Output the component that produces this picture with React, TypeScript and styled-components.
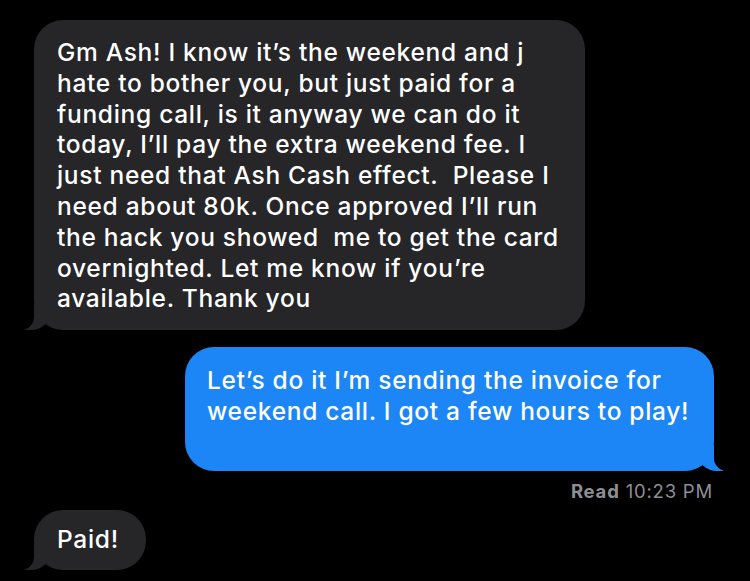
import styled, { createGlobalStyle, css } from 'styled-components'

const GlobalStyle = createGlobalStyle`
  html, body {
    margin: 0;
    padding: 0;
    background: #000;
  }
  body {
    font-family: Inter, Roboto, "Liberation Sans", sans-serif;
    -webkit-font-smoothing: antialiased;
  }
`

const gray = '#262629'
const blue = '#1c86f7'

const Thread = styled.div`
  width: 750px;
  height: 581px;
  overflow: hidden;
  background: #000;
  display: flex;
  flex-direction: column;
  padding-top: 20px;
  box-sizing: border-box;
`

// shared bubble look, tail drawn with the usual two-pseudo-element trick
const bubble = (fill: string, side: 'left' | 'right') => css`
  position: relative;
  box-sizing: border-box;
  background: ${fill};
  color: #fff;
  border-radius: 29px;
  font-size: 24.5px;
  font-weight: 500;
  line-height: 30.8px;
  letter-spacing: 0.7px;
  white-space: pre;

  &::before {
    content: '';
    position: absolute;
    bottom: 0;
    ${side}: -9px;
    width: 26px;
    height: 26px;
    background: ${fill};
    border-bottom-${side === 'left' ? 'right' : 'left'}-radius: 20px;
  }

  &::after {
    content: '';
    position: absolute;
    bottom: 0;
    ${side}: -34px;
    width: 34px;
    height: 27px;
    background: #000;
    border-bottom-${side === 'left' ? 'right' : 'left'}-radius: 13px;
  }
`

const Received = styled.div<{ $width: number }>`
  ${bubble(gray, 'left')}
  align-self: flex-start;
  width: ${p => p.$width}px;
  margin-left: 34px;
  padding: 17px 23px 16px;
`

const Short = styled(Received)`
  padding: 14px 23px 15px;
`

const Sent = styled.div`
  ${bubble(blue, 'right')}
  align-self: flex-end;
  width: 529px;
  margin: 17px 36px 0 0;
  padding: 18px 22px 44px;
`

const Receipt = styled.div`
  align-self: flex-end;
  margin: 10px 37px 9px 0;
  font-size: 18.5px;
  line-height: 20px;
  letter-spacing: 0.8px;
  color: #8e8e93;

  b {
    font-weight: 700;
    margin-right: 6px;
  }
`

const first = `Gm Ash! I know it’s the weekend and j
hate to bother you, but just paid for a
funding call, is it anyway we can do it
today, I’ll pay the extra weekend fee. I
just need that Ash Cash effect.  Please I
need about 80k. Once approved I’ll run
the hack you showed  me to get the card
overnighted. Let me know if you’re
available. Thank you`

const reply = `Let’s do it I’m sending the invoice for
weekend call. I got a few hours to play!`

export default function App() {
  return (
    <>
      <GlobalStyle />
      <Thread>
        <Received $width={551}>{first}</Received>
        <Sent>{reply}</Sent>
        <Receipt><b>Read</b>10:23 PM</Receipt>
        <Short $width={112}>Paid!</Short>
      </Thread>
    </>
  )
}
